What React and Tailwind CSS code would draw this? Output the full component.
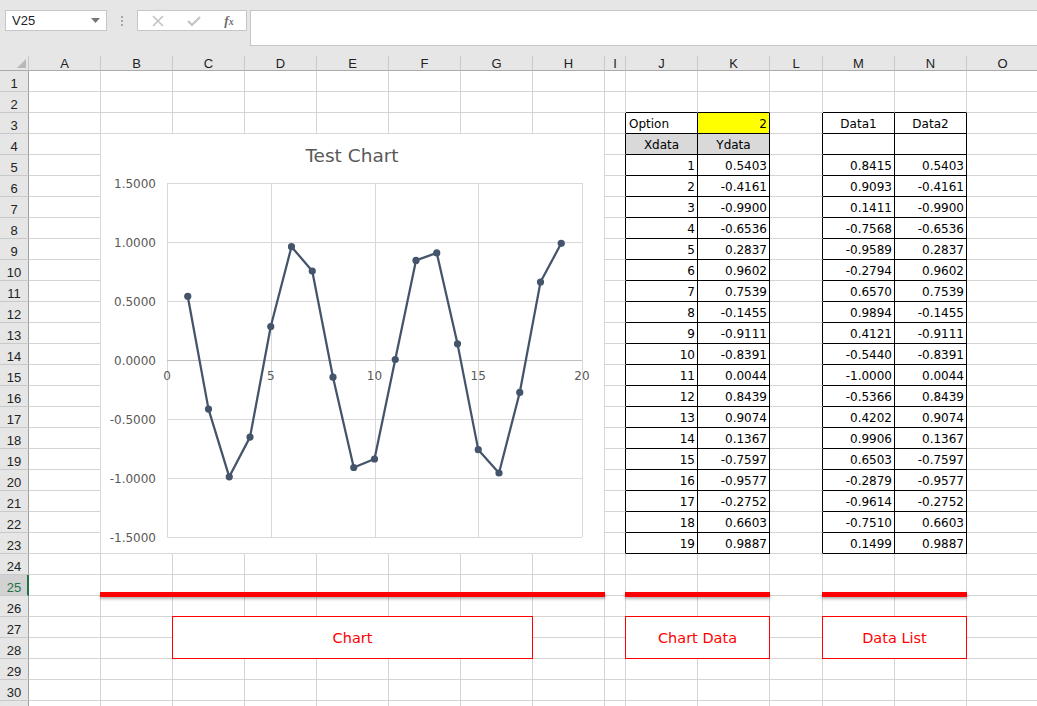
import React from "react";

const COLS = [
  { l: "A", w: "w-[72px]" },
  { l: "B", w: "w-[72px]" },
  { l: "C", w: "w-[72px]" },
  { l: "D", w: "w-[72px]" },
  { l: "E", w: "w-[72px]" },
  { l: "F", w: "w-[72px]" },
  { l: "G", w: "w-[72px]" },
  { l: "H", w: "w-[72px]" },
  { l: "I", w: "w-[21px]" },
  { l: "J", w: "w-[72px]" },
  { l: "K", w: "w-[72px]" },
  { l: "L", w: "w-[53px]" },
  { l: "M", w: "w-[72px]" },
  { l: "N", w: "w-[72px]" },
  { l: "O", w: "w-[72px]" },
];

const YDATA = [0.5403, -0.4161, -0.99, -0.6536, 0.2837, 0.9602, 0.7539, -0.1455, -0.9111, -0.8391, 0.0044, 0.8439, 0.9074, 0.1367, -0.7597, -0.9577, -0.2752, 0.6603, 0.9887];
const DATA1 = [0.8415, 0.9093, 0.1411, -0.7568, -0.9589, -0.2794, 0.657, 0.9894, 0.4121, -0.544, -1.0, -0.5366, 0.4202, 0.9906, 0.6503, -0.2879, -0.9614, -0.751, 0.1499];

function inTable(c, r) {
  if (r < 3 || r > 23) return false;
  return c === 9 || c === 10 || c === 12 || c === 13;
}

function cellContent(c, r) {
  const L = COLS[c].l;
  if (r === 3) {
    if (L === "J") return { t: "Option", a: "l" };
    if (L === "K") return { t: "2", a: "r", bg: "y" };
    if (L === "M") return { t: "Data1", a: "c" };
    if (L === "N") return { t: "Data2", a: "c" };
  }
  if (r === 4) {
    if (L === "J") return { t: "Xdata", a: "c", bg: "g" };
    if (L === "K") return { t: "Ydata", a: "c", bg: "g" };
  }
  if (r >= 5 && r <= 23) {
    const i = r - 5;
    if (L === "J") return { t: String(i + 1), a: "r" };
    if (L === "K") return { t: YDATA[i].toFixed(4), a: "r" };
    if (L === "M") return { t: DATA1[i].toFixed(4), a: "r" };
    if (L === "N") return { t: YDATA[i].toFixed(4), a: "r" };
  }
  return null;
}

function Cell({ c, r }) {
  const rb = inTable(c, r) || inTable(c + 1, r);
  const bb = inTable(c, r) || inTable(c, r + 1);
  const content = cellContent(c, r);
  const bg = content && content.bg === "y" ? "bg-[#ffff00]" : content && content.bg === "g" ? "bg-[#d9d9d9]" : "bg-white";
  const align = !content ? "" : content.a === "r" ? "justify-end pr-[2px]" : content.a === "c" ? "justify-center" : "justify-start pl-[3px]";
  return (
    <div
      className={`${COLS[c].w} shrink-0 h-[21px] flex items-center border-r border-b ${rb ? "border-r-black" : "border-r-[#d4d4d4]"} ${bb ? "border-b-black" : "border-b-[#d4d4d4]"} ${bg} ${align} text-[12px] leading-none text-black whitespace-nowrap overflow-hidden`}
      style={{ fontFamily: '"DejaVu Sans", sans-serif' }}
    >
      {content ? <span className="pt-[1px]">{content.t}</span> : null}
    </div>
  );
}

function Chart() {
  const X0 = 67, X1 = 482, YT = 50, YB = 404;
  const sx = (x) => X0 + (x / 20) * (X1 - X0);
  const sy = (y) => YB - ((y + 1.5) / 3) * (YB - YT);
  const yTicks = [1.5, 1, 0.5, 0, -0.5, -1, -1.5];
  const xTicks = [0, 5, 10, 15, 20];
  const pts = YDATA.map((y, i) => [sx(i + 1), sy(y)]);
  const font = '"DejaVu Sans", sans-serif';
  return (
    <svg width="505" height="421" viewBox="0 0 505 421" className="block">
      <rect x="0.5" y="0.5" width="504" height="420" fill="white" stroke="#d9d9d9" />
      <text x="252" y="29" textAnchor="middle" fontSize="18.5" fill="#595959" fontFamily={font}>Test Chart</text>
      {yTicks.map((v) => (
        <line key={"h" + v} x1={X0} x2={X1} y1={Math.round(sy(v)) + 0.5} y2={Math.round(sy(v)) + 0.5} stroke="#d9d9d9" strokeWidth="1" />
      ))}
      {xTicks.map((v) => (
        <line key={"v" + v} y1={YT} y2={YB} x1={Math.round(sx(v)) + 0.5} x2={Math.round(sx(v)) + 0.5} stroke="#d9d9d9" strokeWidth="1" />
      ))}
      <line x1={X0} x2={X1} y1={227.5} y2={227.5} stroke="#bfbfbf" strokeWidth="1" />
      {yTicks.map((v) => (
        <text key={"yl" + v} x="56" y={sy(v) + 4.5} textAnchor="end" fontSize="12" fill="#595959" fontFamily={font}>{v.toFixed(4)}</text>
      ))}
      {xTicks.map((v) => (
        <text key={"xl" + v} x={sx(v)} y="247" textAnchor="middle" fontSize="12" fill="#595959" fontFamily={font}>{v}</text>
      ))}
      <polyline points={pts.map((p) => p.join(",")).join(" ")} fill="none" stroke="#44546a" strokeWidth="2.25" strokeLinejoin="round" />
      {pts.map((p, i) => (
        <circle key={i} cx={p[0]} cy={p[1]} r="3.6" fill="#44546a" />
      ))}
    </svg>
  );
}

function Toolbar() {
  return (
    <div className="h-[56px] flex items-start pt-[10px] pl-[5px]">
      <div className="w-[102px] h-[21px] bg-white border border-[#c6c6c6] flex items-center pl-[6px] pr-[6px] justify-between">
        <span className="text-[13px] text-[#222] leading-none" style={{ fontFamily: '"Liberation Sans", sans-serif' }}>V25</span>
        <svg width="9" height="5" viewBox="0 0 9 5"><polygon points="0,0 9,0 4.5,5" fill="#777" /></svg>
      </div>
      <div className="w-[30px] h-[21px] flex flex-col items-center justify-center gap-[2px]">
        <div className="w-[2px] h-[2px] bg-[#a6a6a6]" />
        <div className="w-[2px] h-[2px] bg-[#a6a6a6]" />
        <div className="w-[2px] h-[2px] bg-[#a6a6a6]" />
      </div>
      <div className="w-[110px] h-[21px] bg-white border border-[#c6c6c6] flex items-center">
        <div className="w-[38px] flex justify-center pl-[2px]">
          <svg width="12" height="12" viewBox="0 0 12 12"><path d="M1 1 L11 11 M11 1 L1 11" stroke="#c4c4c4" strokeWidth="1.6" /></svg>
        </div>
        <div className="w-[36px] flex justify-center">
          <svg width="14" height="12" viewBox="0 0 14 12"><path d="M1 6 L5 10 L13 2" stroke="#c4c4c4" strokeWidth="2.2" fill="none" /></svg>
        </div>
        <div className="w-[34px] flex justify-center">
          <span className="text-[13px] italic font-bold text-[#6b6b6b] leading-none" style={{ fontFamily: '"Liberation Serif", serif' }}>f<span className="text-[10px]">x</span></span>
        </div>
      </div>
      <div className="ml-[3px] flex-1 h-[36px] bg-white border border-[#c6c6c6] border-r-0" />
    </div>
  );
}

function Grid() {
  const rows = [];
  for (let r = 1; r <= 31; r++) rows.push(r);
  const hdrFont = { fontFamily: '"Liberation Sans", sans-serif' };
  return (
    <div className="relative">
      <div className="flex h-[15px]">
        <div className="w-[29px] shrink-0 h-[15px] border-r border-b border-r-[#c6c6c6] border-b-[#ababab] bg-[#e6e6e6] relative">
          <svg width="9" height="9" viewBox="0 0 9 9" className="absolute right-[2px] bottom-[2px]"><polygon points="9,0 9,9 0,9" fill="#b8b8b8" /></svg>
        </div>
        {COLS.map((col) => (
          <div key={col.l} className={`${col.w} shrink-0 h-[15px] border-r border-b border-r-[#c9c9c9] border-b-[#ababab] bg-[#e6e6e6] flex items-center justify-center text-[13px] leading-none text-[#222]`} style={hdrFont}>
            {col.l}
          </div>
        ))}
      </div>
      {rows.map((r) => (
        <div key={r} className="flex h-[21px]">
          <div
            className={`w-[29px] shrink-0 h-[21px] border-b border-b-[#c9c9c9] flex items-center justify-center text-[13px] leading-none ${r === 25 ? "bg-[#d2d2d2] text-[#217346] border-r-2 border-r-[#217346] pl-[1px]" : "bg-[#e6e6e6] text-[#222] border-r border-r-[#9f9f9f]"}`}
            style={hdrFont}
          >
            {r <= 30 ? <span className="pt-[4px]">{r}</span> : null}
          </div>
          {COLS.map((col, c) => (
            <Cell key={col.l} c={c} r={r} />
          ))}
        </div>
      ))}

      <div className="absolute left-[100px] top-[77px]">
        <Chart />
      </div>

      <div className="absolute left-[100px] top-[536px] w-[505px] h-[5px] bg-[#ff0000] shadow-[0_2px_3px_rgba(0,0,0,0.3)]" />
      <div className="absolute left-[625px] top-[536px] w-[145px] h-[5px] bg-[#ff0000] shadow-[0_2px_3px_rgba(0,0,0,0.3)]" />
      <div className="absolute left-[822px] top-[536px] w-[145px] h-[5px] bg-[#ff0000] shadow-[0_2px_3px_rgba(0,0,0,0.3)]" />

      {[
        { t: "Chart", cls: "left-[172px] w-[361px]" },
        { t: "Chart Data", cls: "left-[625px] w-[145px]" },
        { t: "Data List", cls: "left-[822px] w-[145px]" },
      ].map((b) => (
        <div
          key={b.t}
          className={`absolute top-[560px] h-[43px] ${b.cls} bg-white border border-[#ff0000] flex items-center justify-center text-[14.5px] text-[#ff0000] leading-none`}
          style={{ fontFamily: '"DejaVu Sans", sans-serif' }}
        >
          <span className="pt-[1px]">{b.t}</span>
        </div>
      ))}
    </div>
  );
}

export default function App() {
  return (
    <div className="w-[1037px] h-[706px] overflow-hidden bg-[#e6e6e6] relative">
      <Toolbar />
      <Grid />
    </div>
  );
}
